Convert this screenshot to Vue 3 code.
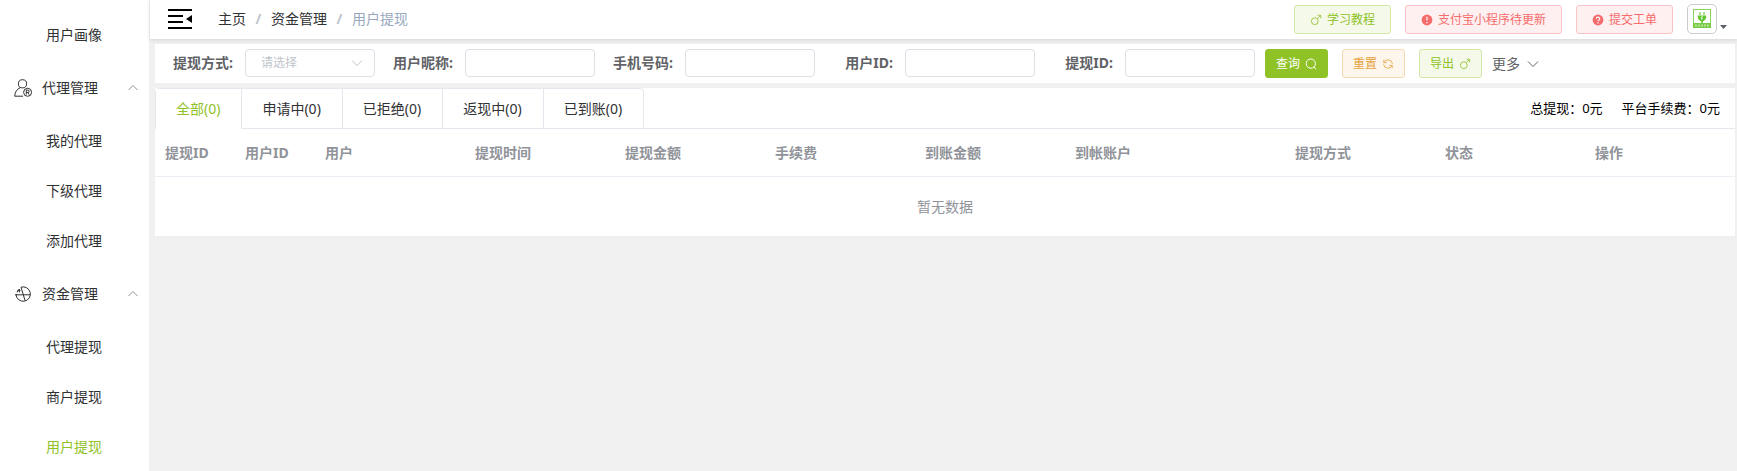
<script setup>
import { ref } from 'vue'

const menu = [
  { items: ['用户画像'] },
  { title: '代理管理', icon: 'agent', items: ['我的代理', '下级代理', '添加代理'] },
  { title: '资金管理', icon: 'fund', items: ['代理提现', '商户提现', '用户提现'] },
]
const active = '用户提现'

const fields = [
  { id: 'nickname', label: '用户昵称:' },
  { id: 'phone', label: '手机号码:' },
  { id: 'uid', label: '用户ID:' },
  { id: 'wid', label: '提现ID:' },
]
const method = ref('')
const form = ref({ nickname: '', phone: '', uid: '', wid: '' })

const tabs = ['全部(0)', '申请中(0)', '已拒绝(0)', '返现中(0)', '已到账(0)']
const tab = ref(0)

const columns = [
  { label: '提现ID', size: 's' },
  { label: '用户ID', size: 's' },
  { label: '用户', size: 'm' },
  { label: '提现时间', size: 'm' },
  { label: '提现金额', size: 'm' },
  { label: '手续费', size: 'm' },
  { label: '到账金额', size: 'm' },
  { label: '到帐账户', size: 'l' },
  { label: '提现方式', size: 'm' },
  { label: '状态', size: 'm' },
  { label: '操作', size: 'auto' },
]
</script>

<template>
  <div class="layout">
    <nav class="side">
      <section v-for="(g, i) in menu" :key="i">
        <button v-if="g.title" class="group" type="button">
          <svg v-if="g.icon === 'agent'" class="group-icon" viewBox="0 0 18 18">
            <circle cx="8.5" cy="4.8" r="4.1" />
            <path d="M6.4 8.6C3 10 .9 13 .7 17.2H9" />
            <circle cx="13.6" cy="13.3" r="4" />
            <path d="M12.3 15.6v-4.5h1.6a1.2 1.2 0 0 1 0 2.4h-1.6m1.6 0 1.2 2.1" />
          </svg>
          <svg v-else class="group-icon" viewBox="0 0 18 18">
            <path d="M7 2.2a7.2 7.2 0 1 1-5 7.6h14.4" />
            <path d="M7 2.2 11.2 16M1 9.8h2" />
            <path d="M3 7.4 4.6 4.4M3.6 5.6h2.8M5.4 4v3.4" />
          </svg>
          <span>{{ g.title }}</span>
          <svg class="fold" viewBox="0 0 12 12"><path d="M1.5 8 6 3.5 10.5 8" /></svg>
        </button>
        <a v-for="t in g.items" :key="t" href="#" class="item" :class="{ on: t === active }">{{ t }}</a>
      </section>
    </nav>

    <main class="main">
      <header class="top">
        <button class="toggle" type="button" aria-label="收起菜单">
          <svg viewBox="0 0 24 22">
            <path d="M0 2h24M0 8h15M0 14h15M0 20h24" />
            <path class="solid" d="M24 7v8l-6-4z" />
          </svg>
        </button>
        <div class="crumbs">
          <a href="#">主页</a><i>/</i><a href="#">资金管理</a><i>/</i><span>用户提现</span>
        </div>
        <div class="actions">
          <button type="button" class="btn wide green">
            <svg viewBox="0 0 12 12"><circle cx="4.8" cy="7.2" r="3.4" /><path d="M7.3 4.7 10.7 1.3M7.6 1.3h3.1v3" /></svg>
            学习教程
          </button>
          <button type="button" class="btn wide red">
            <svg viewBox="0 0 12 12"><circle class="disc" cx="6" cy="6" r="5.4" /><path class="mark" d="M6 2.8v3.8M6 8v1.3" /></svg>
            支付宝小程序待更新
          </button>
          <button type="button" class="btn wide red">
            <svg viewBox="0 0 12 12"><circle class="disc" cx="6" cy="6" r="5.4" /><path class="mark" d="M4.3 4.8a1.7 1.7 0 1 1 2.5 1.5q-.8.4-.8 1M6 8.2v1.2" /></svg>
            提交工单
          </button>
          <button type="button" class="user" aria-label="账户">
            <span class="avatar">
              <svg viewBox="0 0 18 20">
                <rect x=".5" y=".5" width="17" height="18" fill="#fff" stroke="#8bd35f" />
                <path d="M7 3v3M11 3v3" stroke="#8bd35f" stroke-width="1.4" />
                <path d="M4.8 6.5h8.4V8a4.2 4.2 0 0 1-8.4 0z" fill="#62c52d" />
                <path d="M9 11v3" stroke="#62c52d" stroke-width="1.6" />
                <path d="m9.6 7-1.7 2h1.5l-.8 1.6" stroke="#fff" stroke-width=".8" fill="none" />
                <rect y="14" width="18" height="5" fill="#76cc45" />
                <path d="M2 16.5h14" stroke="#b5e398" stroke-width="2" stroke-dasharray="2 1" />
              </svg>
            </span>
            <svg class="caret" viewBox="0 0 7 4"><path d="M0 0h7L3.5 4z" /></svg>
          </button>
        </div>
      </header>

      <form class="panel search" @submit.prevent>
        <div class="field">
          <label for="method">提现方式:</label>
          <div class="select">
            <select id="method" v-model="method">
              <option value="">请选择</option>
            </select>
            <svg viewBox="0 0 12 12"><path d="M1 3.5 6 8.5 11 3.5" /></svg>
          </div>
        </div>
        <div v-for="f in fields" :key="f.id" class="field">
          <label :for="f.id">{{ f.label }}</label>
          <input :id="f.id" v-model="form[f.id]" type="text" />
        </div>
        <div class="tools">
          <button type="submit" class="btn primary">
            查询
            <svg viewBox="0 0 12 12"><circle cx="5.8" cy="5.6" r="4.6" /><path d="m9 9 2 2.2" /></svg>
          </button>
          <button type="reset" class="btn orange">
            重置
            <svg viewBox="0 0 12 12"><path d="M1.8 5V1.8M1.8 4.6h3M2 4.4a4.4 4.4 0 0 1 8.4 1.4M10.2 7v3.2M10.2 7.4h-3M10 7.6A4.4 4.4 0 0 1 1.6 6.4" /></svg>
          </button>
          <button type="button" class="btn green">
            导出
            <svg viewBox="0 0 12 12"><circle cx="4.8" cy="7.2" r="3.4" /><path d="M7.3 4.7 10.7 1.3M7.6 1.3h3.1v3" /></svg>
          </button>
        </div>
        <button type="button" class="more">
          更多
          <svg viewBox="0 0 12 12"><path d="M1 3.5 6 8.5 11 3.5" /></svg>
        </button>
      </form>

      <section class="panel">
        <div class="tabbar">
          <div class="tabs" role="tablist">
            <button
              v-for="(t, i) in tabs"
              :key="t"
              type="button"
              role="tab"
              class="tab"
              :class="{ on: tab === i }"
              :aria-selected="tab === i"
              @click="tab = i"
            >{{ t }}</button>
          </div>
          <div class="totals"><span>总提现：0元</span><span>平台手续费：0元</span></div>
        </div>
        <table>
          <colgroup><col v-for="c in columns" :key="c.label" :class="c.size" /></colgroup>
          <thead>
            <tr><th v-for="c in columns" :key="c.label" scope="col">{{ c.label }}</th></tr>
          </thead>
          <tbody>
            <tr><td :colspan="columns.length">暂无数据</td></tr>
          </tbody>
        </table>
      </section>
    </main>
  </div>
</template>

<style>
body {
  margin: 0;
}
</style>

<style scoped>
* {
  box-sizing: border-box;
}
.layout {
  display: flex;
  height: 100vh;
  overflow: hidden;
  background: #f0f0f0;
  color: #303133;
  font: 14px/20px "Noto Sans", "Noto Sans CJK SC", sans-serif;
}
button,
input,
select {
  margin: 0;
  font: inherit;
  color: inherit;
}
button {
  padding: 0;
  border: 0;
  background: none;
  cursor: pointer;
}
a {
  color: inherit;
  text-decoration: none;
}
svg {
  display: block;
  flex: none;
  fill: none;
  stroke: currentColor;
}
.side {
  flex: none;
  width: 149px;
  padding-top: 10px;
  overflow: hidden;
  background: #fff;
}
.group {
  display: flex;
  align-items: center;
  width: 100%;
  height: 56px;
  padding: 0 10px 0 14px;
}
.group-icon {
  width: 18px;
  height: 18px;
  margin-right: 10px;
}
.fold {
  width: 12px;
  height: 12px;
  margin-left: auto;
  color: #909399;
}
.item {
  display: block;
  padding-left: 46px;
  line-height: 50px;
}
.item.on,
.tab.on {
  color: #8fc226;
}
.main {
  flex: 1;
  min-width: 0;
  padding-left: 1px;
}
.top {
  display: flex;
  align-items: center;
  height: 39px;
  padding: 0 10px 1px 18px;
  background: #fff;
  box-shadow: 0 1px 4px rgba(0, 21, 41, 0.12);
}
.toggle {
  margin-right: 26px;
  color: #000;
}
.toggle svg {
  width: 24px;
  height: 22px;
  stroke-width: 2;
}
.toggle .solid {
  fill: #000;
  stroke: none;
}
.crumbs {
  display: flex;
}
.crumbs i {
  width: 25px;
  color: #c0c4cc;
  font-style: normal;
  font-weight: 700;
  text-align: center;
}
.crumbs span {
  color: #97a8be;
}
.actions {
  display: flex;
  align-items: flex-end;
  gap: 14px;
  margin-left: auto;
}
.btn {
  display: flex;
  align-items: center;
  gap: 5px;
  height: 29px;
  padding: 0 10px;
  border: 1px solid;
  border-radius: 3px;
  font-size: 12px;
  white-space: nowrap;
}
.btn svg {
  width: 12px;
  height: 12px;
}
.btn.wide {
  padding: 0 15px;
}
.btn.green svg,
.btn.orange svg {
  opacity: 0.8;
}
.green {
  color: #8fc226;
  background: #f4f9e9;
  border-color: #d2e7a8;
}
.red {
  color: #f56c6c;
  background: #fef0f0;
  border-color: #fbc4c4;
}
.orange {
  color: #e6a23c;
  background: #fdf6ec;
  border-color: #f5dab1;
}
.primary {
  color: #fff;
  background: #8fc226;
  border-color: #8fc226;
}
.disc {
  fill: currentColor;
  stroke: none;
}
.mark {
  stroke: #fff;
  stroke-width: 1.2;
}
.user {
  display: flex;
  align-items: flex-end;
  gap: 3px;
  height: 30px;
}
.avatar {
  display: grid;
  place-items: center;
  width: 30px;
  height: 30px;
  border: 1px solid #ccc;
  border-radius: 5px;
}
.avatar svg {
  width: 18px;
  height: 20px;
  stroke: none;
}
.user .caret {
  width: 7px;
  height: 4px;
  margin-bottom: 5px;
  fill: #5a5e66;
  stroke: none;
}
.panel {
  margin: 5px 2px 0 5px;
  background: #fff;
}
.search {
  display: flex;
  align-items: flex-start;
  padding: 5px 0;
  color: #606266;
}
.field {
  display: flex;
  align-items: center;
}
.field label {
  width: 90px;
  padding-right: 12px;
  font-weight: 700;
  text-align: right;
  white-space: nowrap;
}
.field input,
.select {
  width: 130px;
  height: 28px;
  border: 1px solid #dcdfe6;
  border-radius: 4px;
  background: #fff;
}
.field input {
  padding: 0 15px;
  font-size: 12px;
}
.select {
  display: grid;
  align-items: center;
  color: #c0c4cc;
}
.select select {
  grid-area: 1 / 1;
  width: 100%;
  height: 26px;
  padding: 0 30px 0 15px;
  border: 0;
  background: none;
  font-size: 12px;
  appearance: none;
}
.select svg {
  grid-area: 1 / 1;
  justify-self: end;
  width: 12px;
  height: 12px;
  margin-right: 11px;
  pointer-events: none;
}
.tools {
  display: flex;
  gap: 14px;
  margin: 0 10px;
}
.more {
  display: flex;
  align-items: center;
  gap: 7px;
  height: 29px;
}
.more svg {
  width: 12px;
  height: 12px;
}
.tabbar {
  display: flex;
  justify-content: space-between;
  height: 41px;
  border-bottom: 1px solid #e4e7ed;
}
.tabs {
  display: flex;
  height: 41px;
  border: 1px solid #e4e7ed;
  border-radius: 4px 4px 0 0;
}
.tab {
  padding: 0 21px 0 20px;
  white-space: nowrap;
}
.tab + .tab {
  border-left: 1px solid #e4e7ed;
}
.tab.on {
  height: 40px;
  background: #fff;
}
.totals {
  display: flex;
  align-items: center;
  gap: 19px;
  padding-right: 15px;
  color: #000;
  font-size: 13px;
}
table {
  width: 100%;
  border-spacing: 0;
  table-layout: fixed;
}
.s {
  width: 80px;
}
.m {
  width: 150px;
}
.l {
  width: 220px;
}
th,
td {
  padding: 0 10px;
  border-bottom: 1px solid #ebeef5;
  color: #909399;
}
th {
  height: 48px;
  text-align: left;
}
td {
  height: 60px;
  text-align: center;
}
</style>
